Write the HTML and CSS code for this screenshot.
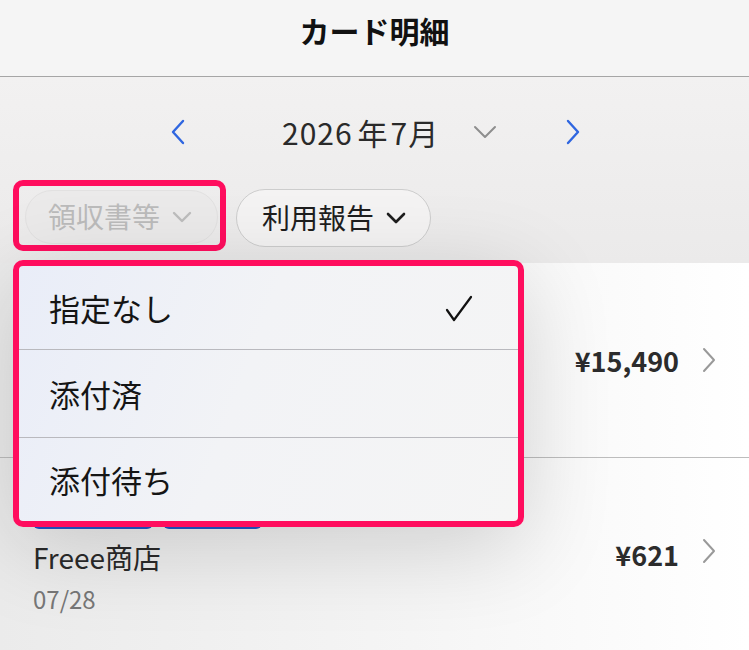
FILE: index.html
```html
<!DOCTYPE html>
<html lang="ja">
<head>
<meta charset="utf-8">
<link rel="stylesheet" href="styles.css">
</head>
<body>
<div class="app">
  <header class="header"><h1 class="title">カード明細</h1></header>
  <section class="top">
    <div class="month-nav">
      <svg class="chev chev-left" width="16" height="26" viewBox="0 0 16 26"><path d="M13 2 L3 13 L13 24" fill="none" stroke="#2f66e0" stroke-width="2.4" stroke-linecap="round" stroke-linejoin="round"/></svg>
      <span class="month">2026<span class="nen">年</span>7月</span>
      <svg class="dd" width="24" height="14" viewBox="0 0 24 14"><path d="M2 2 L12 12 L22 2" fill="none" stroke="#8e8e8e" stroke-width="2" stroke-linecap="round" stroke-linejoin="round"/></svg>
      <svg class="chev chev-right" width="16" height="26" viewBox="0 0 16 26"><path d="M3 2 L13 13 L3 24" fill="none" stroke="#2f66e0" stroke-width="2.4" stroke-linecap="round" stroke-linejoin="round"/></svg>
    </div>
    <div class="filters">
      <div class="hl">
        <button class="pill pill-disabled">領収書等<svg class="pill-chev" width="20" height="12" viewBox="0 0 20 12"><path d="M2 2 L10 10 L18 2" fill="none" stroke="#bdbdbd" stroke-width="2.4" stroke-linecap="round" stroke-linejoin="round"/></svg></button>
      </div>
      <button class="pill pill-active">利用報告<svg class="pill-chev" width="20" height="12" viewBox="0 0 20 12"><path d="M2 2 L10 10 L18 2" fill="none" stroke="#1e1e1e" stroke-width="2.6" stroke-linecap="round" stroke-linejoin="round"/></svg></button>
    </div>
  </section>
  <section class="list">
    <div class="row row-first">
      <div class="row-main">
        <div class="tags"><span class="tag"></span><span class="tag tag-b"></span></div>
      </div>
      <div class="amount">¥15,490</div>
      <svg class="row-chev" width="14" height="26" viewBox="0 0 14 26"><path d="M2 2 L12 13 L2 24" fill="none" stroke="#999" stroke-width="2" stroke-linecap="round" stroke-linejoin="round"/></svg>
    </div>
    <div class="row row-second">
      <div class="row-main">
        <div class="tags"><span class="tag"></span><span class="tag tag-b"></span></div>
        <div class="shop">Freee商店</div>
        <div class="date">07/28</div>
      </div>
      <div class="amount">¥621</div>
      <svg class="row-chev" width="14" height="26" viewBox="0 0 14 26"><path d="M2 2 L12 13 L2 24" fill="none" stroke="#999" stroke-width="2" stroke-linecap="round" stroke-linejoin="round"/></svg>
    </div>
  </section>
  <div class="menu">
    <div class="menu-item item-1"><span>指定なし</span><svg class="check" width="28" height="28" viewBox="0 0 28 28"><path d="M2 15 L9 25 L26 2" fill="none" stroke="#111" stroke-width="2.2" stroke-linecap="round" stroke-linejoin="round"/></svg></div>
    <div class="menu-item item-2"><span>添付済</span></div>
    <div class="menu-item item-3"><span>添付待ち</span></div>
  </div>
</div>
</body>
</html>
```

FILE: styles.css
```css
* { box-sizing: border-box; }
html, body { margin: 0; padding: 0; }
body {
  font-family: "Noto Sans CJK JP", "Noto Sans", sans-serif;
  background: #fff;
  color: #222;
}
.app {
  position: relative;
  width: 749px;
  height: 650px;
  overflow: hidden;
}
.header {
  height: 77px;
  background: #f5f5f5;
  border-bottom: 1px solid #a6a6a6;
  display: flex;
  align-items: center;
  justify-content: center;
}
.title {
  margin: 0;
  font-size: 30px;
  font-weight: 700;
  color: #111;
  line-height: 1;
  padding-bottom: 16px;
}
.top {
  height: 186px;
  background: linear-gradient(180deg, #f2f1f1 0%, #ebeaea 100%);
}
.month-nav {
  height: 110px;
  display: flex;
  align-items: center;
  padding-left: 170px;
}
.month {
  margin-left: 96px;
  font-size: 30px;
  color: #2a2a2a;
  line-height: 1;
  letter-spacing: 1px;
}
.nen { margin-left: 5px; margin-right: 2px; }
.dd { margin-left: 34px; }
.chev-right { margin-left: 68px; }
.filters {
  display: flex;
  align-items: flex-start;
  gap: 10px;
  padding-left: 13px;
  margin-top: -7px;
}
.hl {
  border: 6px solid #ff0d5e;
  border-radius: 10px;
  padding: 4px 2px 1px 6px;
}
.pill {
  font-family: "Noto Sans CJK JP", "Noto Sans", sans-serif;
  font-size: 28px;
  line-height: 1;
  border-radius: 29px;
  border: 1px solid #cdcdcd;
  background: #f4f3f3;
  color: #1e1e1e;
  display: flex;
  align-items: center;
  gap: 12px;
}
.pill-active {
  height: 58px;
  width: 195px;
  padding: 0 20px 2px 25px;
  margin-top: 9px;
}
.pill-disabled {
  height: 54px;
  width: 193px;
  padding: 0 20px 2px 22px;
  background: #ebeaea;
  border-color: #e2e1e1;
  color: #bbbbbb;
}
.pill-chev { margin-top: 2px; }
.list {
  background: linear-gradient(90deg, #ebebeb 0%, #f5f5f5 55%, #ffffff 100%);
}
.row {
  display: flex;
  align-items: center;
  padding-left: 33px;
  padding-right: 33px;
  position: relative;
}
.row-first {
  height: 195px;
  border-bottom: 1px solid #bdbdbd;
}
.row-second {
  height: 192px;
  align-items: flex-start;
  padding-top: 47px;
}
.row-main { flex: 1; }
.tags { display: flex; gap: 10px; }
.tag {
  display: block;
  width: 120px;
  height: 24px;
  border-radius: 6px;
  background: #2156c9;
}
.tag-b { width: 99px; }
.shop {
  font-size: 28px;
  color: #2a2a2a;
  line-height: 1;
  margin-top: 14px;
}
.date {
  font-size: 24px;
  color: #777;
  line-height: 1;
  margin-top: 16px;
}
.amount {
  font-size: 27px;
  font-weight: 700;
  color: #2c2c2c;
  line-height: 1;
  margin-right: 23px;
}
.row-second .amount { margin-top: 36px; }
.row-second .row-chev { margin-top: 33px; }
.menu {
  position: absolute;
  left: 13px;
  top: 260px;
  width: 511px;
  height: 267px;
  border: 6px solid #ff0d5e;
  border-radius: 10px;
  background: linear-gradient(110deg, #e9edf8 0%, #f2f3f6 45%, #f5f5f5 100%);
  box-shadow: 0 20px 90px rgba(0, 0, 0, 0.16);
}
.menu-item {
  display: flex;
  align-items: center;
  justify-content: space-between;
  padding-left: 30px;
  padding-right: 45px;
  font-size: 31px;
  color: #151515;
  line-height: 1;
}
.item-1 { height: 84px; border-bottom: 1px solid #b9b9be; }
.item-2 { height: 88px; border-bottom: 1px solid #b9b9be; }
.item-3 { height: 83px; }
.check { margin-top: 2px; }
```
